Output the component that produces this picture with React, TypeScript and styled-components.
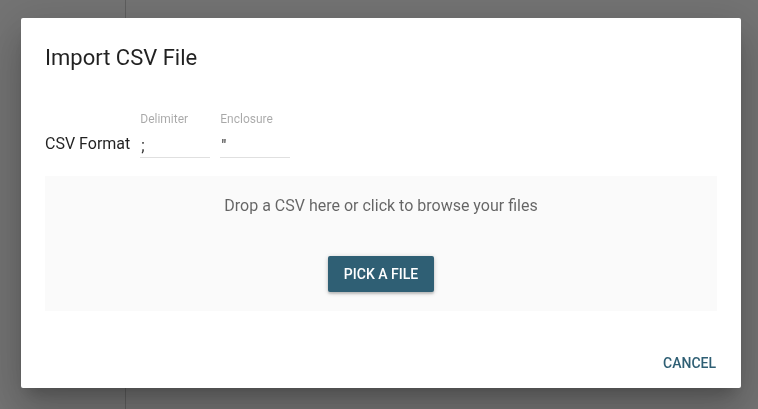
import React from 'react';
import styled, { createGlobalStyle } from 'styled-components';

const GlobalStyle = createGlobalStyle`
  html, body {
    margin: 0;
    padding: 0;
    height: 100%;
    overflow: hidden;
  }
  body {
    font-family: Roboto, "Liberation Sans", Arial, sans-serif;
    background: #ffffff;
  }
`;

const Page = styled.div`
  display: flex;
  width: 758px;
  height: 409px;
`;

const Sidebar = styled.div`
  width: 125px;
  border-right: 1px solid #cfcfcf;
`;

const Overlay = styled.div`
  position: fixed;
  inset: 0;
  background: rgba(0, 0, 0, 0.55);
  display: flex;
  align-items: flex-start;
  padding: 18px 0 0 21px;
`;

const Dialog = styled.div`
  width: 720px;
  height: 370px;
  background: #fff;
  border-radius: 2px;
  box-shadow: 0 11px 15px -7px rgba(0,0,0,0.2), 0 24px 38px 3px rgba(0,0,0,0.14), 0 9px 46px 8px rgba(0,0,0,0.12);
  display: flex;
  flex-direction: column;
`;

const Title = styled.h2`
  margin: 0;
  padding: 24px 24px 20px;
  font-size: 22px;
  line-height: 32px;
  font-weight: 400;
  color: rgba(0, 0, 0, 0.87);
`;

const Content = styled.div`
  padding: 16px 24px 0;
  display: flex;
  flex-direction: column;
`;

const FormatRow = styled.div`
  display: flex;
  align-items: flex-end;
  gap: 10px;
  height: 48px;
`;

const FormatLabel = styled.span`
  font-size: 16px;
  line-height: 29px;
  color: rgba(0, 0, 0, 0.87);
`;

const Field = styled.label`
  display: flex;
  flex-direction: column;
  width: 70px;
`;

const FieldLabel = styled.span`
  font-size: 12px;
  line-height: 16px;
  color: rgba(0, 0, 0, 0.34);
`;

const FieldInput = styled.input`
  box-sizing: content-box;
  height: 23px;
  border: none;
  border-bottom: 1px solid #e0e0e0;
  padding: 7px 1px 0;
  font-family: inherit;
  font-size: 16px;
  color: rgba(0, 0, 0, 0.87);
  background: transparent;
  outline: none;
`;

const DropZone = styled.div`
  margin-top: 18px;
  height: 135px;
  background: #fafafa;
  display: flex;
  flex-direction: column;
  align-items: center;
`;

const DropText = styled.p`
  margin: 20px 0 0;
  font-size: 16px;
  line-height: 20px;
  color: rgba(0, 0, 0, 0.6);
`;

const RaisedButton = styled.button`
  margin-top: 40px;
  height: 36px;
  padding: 0 16px;
  border: none;
  border-radius: 2px;
  background: #2f5f74;
  color: #fff;
  font-family: inherit;
  font-size: 14px;
  font-weight: 500;
  box-shadow: 0 1px 5px rgba(0,0,0,0.2), 0 2px 2px rgba(0,0,0,0.14);
  cursor: pointer;
`;

const Actions = styled.div`
  margin-top: auto;
  padding: 8px 8px 7px;
  display: flex;
  justify-content: flex-end;
`;

const FlatButton = styled.button`
  height: 36px;
  min-width: 64px;
  padding: 0 17px 0 16px;
  border: none;
  background: transparent;
  color: #2f5f74;
  font-family: inherit;
  font-size: 14px;
  font-weight: 500;
  cursor: pointer;
`;

export default function App() {
  return (
    <>
      <GlobalStyle />
      <Page>
        <Sidebar />
      </Page>
      <Overlay>
        <Dialog>
          <Title>Import CSV File</Title>
          <Content>
            <FormatRow>
              <FormatLabel>CSV Format</FormatLabel>
              <Field>
                <FieldLabel>Delimiter</FieldLabel>
                <FieldInput defaultValue=";" />
              </Field>
              <Field>
                <FieldLabel>Enclosure</FieldLabel>
                <FieldInput defaultValue={'"'} />
              </Field>
            </FormatRow>
            <DropZone>
              <DropText>Drop a CSV here or click to browse your files</DropText>
              <RaisedButton>PICK A FILE</RaisedButton>
            </DropZone>
          </Content>
          <Actions>
            <FlatButton>CANCEL</FlatButton>
          </Actions>
        </Dialog>
      </Overlay>
    </>
  );
}
